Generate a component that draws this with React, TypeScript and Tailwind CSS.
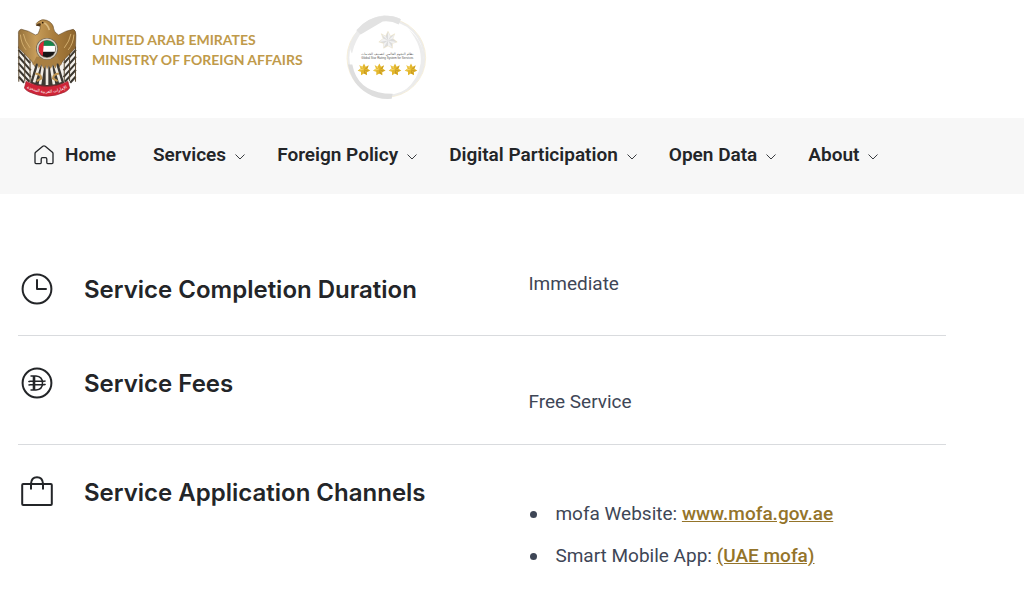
import type { ReactNode } from 'react';

const NAV_ITEMS = ['Services', 'Foreign Policy', 'Digital Participation', 'Open Data', 'About'];

const STAR_POINTS =
    '0,-19 5,-9 14,-14 10,-4 19,3 9,6 9,16 0,11 -9,16 -9,6 -19,3 -10,-4 -14,-14 -5,-9';

function Emblem() {
    return (
        <svg viewBox="18 22 186 238" className="h-[79px] w-[62px]" role="img" aria-label="UAE emblem">
            <defs>
                <linearGradient id="gold" x1="0" y1="0" x2="1" y2="0">
                    <stop offset="0" stopColor="#94703a" />
                    <stop offset="0.3" stopColor="#c79d5a" />
                    <stop offset="0.6" stopColor="#ab7f3e" />
                    <stop offset="1" stopColor="#8d652d" />
                </linearGradient>
                <clipPath id="disc">
                    <circle cx="111" cy="115" r="25" />
                </clipPath>
            </defs>
            {/* hanging feathers */}
            <path d="M24 108L48 130L72 160L84 190L60 220L25 212Z" fill="#f4f1ec" />
            <path d="M199 108L175 130L151 160L139 190L163 220L198 212Z" fill="#f4f1ec" />
            <g stroke="#3a362f" strokeWidth="6">
                <path d="M25 118L60 158M25 138L62 180M25 158L62 200M25 178L58 214M26 199L42 217" />
                <path d="M198 118L163 158M198 138L161 180M198 158L161 200M198 178L165 214M197 199L181 217" />
            </g>
            <path d="M26 108V214M44 124V212M60 144V214M197 108V214M179 124V212M163 144V214" stroke="#5a4a33" strokeWidth="3" />
            {/* wings and head */}
            <path d="M25 72Q23 58 34 56Q57 60 76 73L84 70L88 60Q92 51 90 46L79 44Q76 39 83 34Q96 23 110 29Q130 37 131 54Q132 66 146 73Q166 60 190 56Q199 60 198 74L197 112L178 132L160 150L146 172H77L63 150L45 132L25 112Z" fill="url(#gold)" stroke="#4d3517" strokeWidth="1.5" />
            <path d="M78 45Q82 37 91 38Q95 43 90 47Z" fill="#51371a" />
            <circle cx="98" cy="36" r="2.5" fill="#2b1b0b" />
            <path d="M103 37Q114 43 118 58" fill="none" stroke="#d9ba82" strokeWidth="5" />
            <path d="M31 72Q33 100 48 118M40 70Q44 92 60 112M192 72Q190 100 175 118M183 70Q179 92 163 112" fill="none" stroke="#d3ae6e" strokeWidth="3" />
            {/* tail */}
            <path d="M78 158L60 218Q111 246 163 218L145 158Z" fill="#3d3933" />
            <path d="M89 160L72 216M100 160L90 222M111 160V224M122 160L132 222M134 160L151 216" stroke="#f1ece3" strokeWidth="8" />
            <path d="M79 139Q74 151 66 162L82 158L86 174L94 162L101 176L107 164L111 178L116 164L122 176L129 162L137 174L141 158L157 162Q148 151 143 139Z" fill="#a87f42" />
            <path d="M76 190Q92 189 94 204L80 212M147 190Q131 189 129 204L143 212" fill="none" stroke="#be9451" strokeWidth="6" />
            {/* flag disc */}
            <circle cx="111" cy="115" r="33" fill="#6d6557" />
            <circle cx="111" cy="115" r="29" fill="none" stroke="#ddd6c9" strokeWidth="4" />
            <g clipPath="url(#disc)">
                <rect x="86" y="90" width="50" height="18" fill="#16844b" />
                <rect x="86" y="106" width="50" height="18" fill="#fff" />
                <rect x="86" y="124" width="50" height="18" fill="#171717" />
                <path d="M86 90H102L98 140H86Z" fill="#dd2635" />
            </g>
            {/* ribbon */}
            <path d="M48 213Q111 243 174 213L179 233Q173 242 165 245Q111 270 58 245Q48 241 43 233Z" fill="#cf2437" stroke="#96202c" strokeWidth="2" />
            <path id="ribbonLine" d="M44 230Q111 266 178 230" fill="none" />
            <text fontSize="13" fill="#fff" textAnchor="middle" className="font-['Noto_Sans','DejaVu_Sans',sans-serif]">
                <textPath href="#ribbonLine" startOffset="50%">الإمارات العربية المتحدة</textPath>
            </text>
        </svg>
    );
}

function StarRatingBadge() {
    return (
        <svg viewBox="18 18 246 260" className="h-[87px] w-[82px]" role="img" aria-label="Global Star Rating System for Services, four stars">
            <circle cx="139" cy="149" r="114" fill="none" stroke="#ececec" strokeWidth="6" />
            <circle cx="139" cy="149" r="118" fill="none" stroke="#f3e8cb" strokeWidth="2" />
            <path d="M31 104Q63 28 132 22Q160 22 181 32L176 45Q154 34 128 38Q71 41 42 115L36 136Q28 126 31 104Z" fill="#ebebeb" />
            <path d="M49 66Q82 27 132 23Q160 22 183 33L176 49Q154 37 128 40L62 79Z" fill="#e2e2e2" />
            <path d="M24 169H37Q51 246 135 256L158 257L155 272Q112 275 83 256Q35 229 24 169Z" fill="#dedede" />
            <path d="M206 63Q260 109 250 170Q239 223 192 249Q236 214 242 165Q247 111 206 63Z" fill="#ececec" />
            <g transform="translate(144 97) scale(1.45)">
                <polygon points={STAR_POINTS} fill="#dcdcdc" stroke="#eee1bd" />
                <path d="M0 0L0-17L5-9ZM0 0L14-13L10-4ZM0 0L17 3L9 6ZM0 0L9 15L0 11ZM0 0L-9 15L-9 6ZM0 0L-18 3L-10-4ZM0 0L-14-13L-5-9Z" fill="#f2f2f2" />
            </g>
            <text x="142" y="141" fontSize="10" fill="#555" textAnchor="middle" direction="rtl" className="font-['DejaVu_Sans',sans-serif]">
                نظام النجوم العالمي لتصنيف الخدمات
            </text>
            <text x="142" y="154" fontSize="9" fill="#555" textAnchor="middle" className="font-['Liberation_Sans',sans-serif]">
                Global Star Rating System for Services
            </text>
            {[72, 118, 165, 213].map((x) => (
                <g key={x} transform={`translate(${x} 185)`}>
                    <polygon points={STAR_POINTS} fill="#e3b72c" />
                    <path d="M0 0L9 15L0 11ZM0 0L17 3L9 6ZM0 0L14-13L10-4Z" fill="#c99b22" />
                    <path d="M0 0L-14-13L-5-9ZM0 0L-18 3L-10-4Z" fill="#f4d466" />
                </g>
            ))}
        </svg>
    );
}

function HomeIcon() {
    return (
        <svg viewBox="0 0 20 20" className="size-5" fill="none" stroke="#232528" strokeWidth="1.3" strokeLinejoin="round" aria-hidden="true">
            <path d="M1 8.6Q1 7.9 1.6 7.3L8.8 1.2Q10 .4 11.2 1.2L18.4 7.3Q19 7.9 19 8.6V17.5Q19 18.6 18 18.6H13.7Q12.8 18.6 12.8 17.5V13.9Q12.8 12.6 11.5 12.6H8.5Q7.2 12.6 7.2 13.9V17.5Q7.2 18.6 6.3 18.6H2Q1 18.6 1 17.5Z" />
        </svg>
    );
}

function ChevronIcon() {
    return (
        <svg viewBox="0 0 10 6" className="mt-1 h-[6px] w-[10px]" fill="none" stroke="#3a3d41" strokeWidth="1" aria-hidden="true">
            <path d="M.5.5L5 5L9.5.5" />
        </svg>
    );
}

function ClockIcon() {
    return (
        <svg viewBox="0 0 32 32" className="size-8" fill="none" stroke="#232528" strokeWidth="2" aria-hidden="true">
            <circle cx="16" cy="16" r="14.4" />
            <path d="M16 7V16H25" strokeLinejoin="round" strokeLinecap="round" />
        </svg>
    );
}

function DirhamIcon() {
    return (
        <svg viewBox="0 0 32 32" className="size-8" fill="none" stroke="#232528" aria-hidden="true">
            <circle cx="16" cy="16" r="14.4" strokeWidth="2" />
            <path d="M9.5 9H15Q21.5 9.5 21.5 16Q21.5 22.5 15 23H9.5" strokeWidth="1.6" />
            <path d="M13 9V23" strokeWidth="2.6" />
            <path d="M7.5 15Q8 14.3 9.2 14.3H23Q24 14.3 24.5 13.6M7.5 18.4Q8 17.7 9.2 17.7H23Q24 17.7 24.5 17" strokeWidth="1.4" />
        </svg>
    );
}

function BagIcon() {
    return (
        <svg viewBox="0 0 32 32" className="size-8" fill="none" stroke="#232528" strokeWidth="2" strokeLinejoin="round" aria-hidden="true">
            <rect x="1.2" y="8" width="29.6" height="21" rx="1" />
            <path d="M10 13.5V7.5Q10.5 1.2 16 1.2Q21.5 1.2 22 7.5V13.5" />
        </svg>
    );
}

interface ServiceRowProps {
    icon: ReactNode;
    title: string;
    children: ReactNode;
}

function ServiceRow({ icon, title, children }: ServiceRowProps) {
    return (
        <section className="grid grid-cols-[55%_1fr] border-b border-[#d9dbde] pt-[31px] last:border-b-0">
            <div className="flex items-start gap-[31px] pl-[3px]">
                {icon}
                <h2 className="font-['Inter',sans-serif] text-2xl leading-[34px] font-semibold text-[#232528]">{title}</h2>
            </div>
            <div>{children}</div>
        </section>
    );
}

function Channel({ children }: { children: ReactNode }) {
    return (
        <li className="flex items-center gap-[18px] before:size-[7px] before:rounded-full before:bg-[#3e4656]">
            <span>{children}</span>
        </li>
    );
}

export default function App() {
    return (
        <div className="min-h-screen bg-white font-['Roboto',sans-serif] text-[19px] leading-7 text-[#3e4656]">
            <header>
                <div className="flex items-start pt-[14px] pb-[17px] pl-4">
                    <a href="#" className="flex items-start gap-[14px] pt-1">
                        <Emblem />
                        <span className="pt-3 font-['Lato',sans-serif] text-sm leading-5 font-bold whitespace-nowrap text-[#c09a4a]">
                            UNITED ARAB EMIRATES
                            <br />
                            MINISTRY OF FOREIGN AFFAIRS
                        </span>
                    </a>
                    <div className="ml-[43px]">
                        <StarRatingBadge />
                    </div>
                </div>
                <nav className="bg-[#f7f7f7] pt-[23px] pb-[25px] pl-[34px] font-semibold text-[#232528]">
                    <ul className="flex items-center gap-8 whitespace-nowrap">
                        <li className="mr-[5px]">
                            <a href="#" className="flex items-center gap-[11px]">
                                <HomeIcon />
                                Home
                            </a>
                        </li>
                        {NAV_ITEMS.map((item) => (
                            <li key={item}>
                                <button type="button" className="flex items-center gap-[9px]">
                                    {item}
                                    <ChevronIcon />
                                </button>
                            </li>
                        ))}
                    </ul>
                </nav>
            </header>

            <main className="pt-12 pr-[78px] pl-[18px]">
                <ServiceRow icon={<ClockIcon />} title="Service Completion Duration">
                    <p className="-mt-[3px] pb-[37px]">Immediate</p>
                </ServiceRow>
                <ServiceRow icon={<DirhamIcon />} title="Service Fees">
                    <p className="pt-[21px] pb-7">Free Service</p>
                </ServiceRow>
                <ServiceRow icon={<BagIcon />} title="Service Application Channels">
                    <ul className="space-y-[14px] pt-6 pl-[2px]">
                        <Channel>
                            mofa Website:{' '}
                            <a href="#" className="font-medium text-[#94742a] underline">www.mofa.gov.ae</a>
                        </Channel>
                        <Channel>
                            Smart Mobile App:{' '}
                            <a href="#" className="font-medium text-[#94742a] underline">(UAE mofa)</a>
                        </Channel>
                    </ul>
                </ServiceRow>
            </main>
        </div>
    );
}
